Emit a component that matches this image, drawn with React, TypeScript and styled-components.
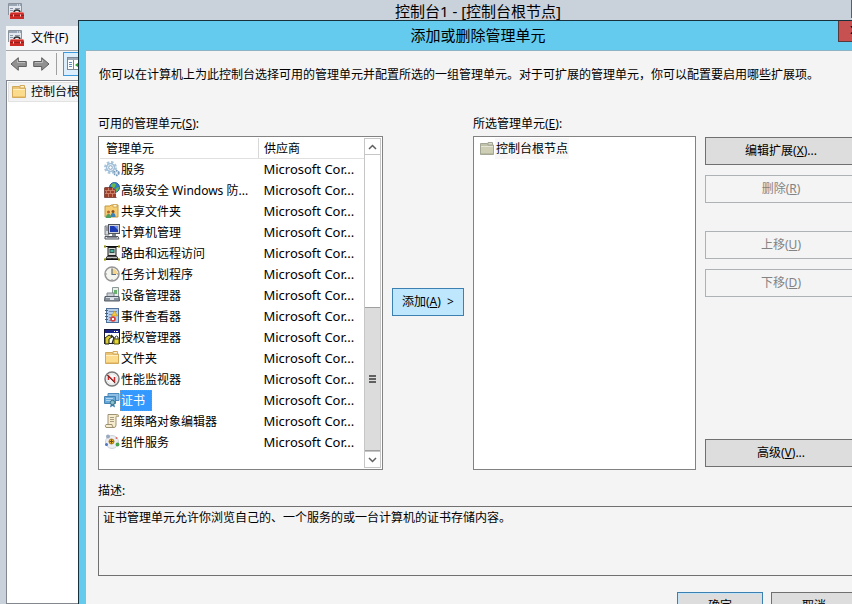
import React from "react";
import styled, { createGlobalStyle, css } from "styled-components";

const GlobalStyle = createGlobalStyle`
  * { box-sizing: border-box; }
  body {
    margin: 0;
    background: #c9d1db;
    color: #000;
    font: 12px/16px "Noto Sans", "Noto Sans CJK SC", sans-serif;
  }
  button, textarea { font: inherit; color: inherit; }
`;

/* ---------- Console window ---------- */

const Desktop = styled.main`
  position: relative;
  display: flex;
  height: 100vh;
  overflow: hidden;
`;

const ConsoleWindow = styled.section`
  flex: 1 0 auto;
  display: flex;
  flex-direction: column;
  margin-right: -104px;
  width: calc(100% + 104px);
  padding-left: 6px;
  background: #c9d1db;
`;

const ConsoleTitleBar = styled.header`
  display: grid;
  grid-template-columns: 1fr auto 1fr;
  height: 26px;
  padding: 0 8px 0 2px;
`;

const ConsoleIcon = styled.div`
  padding-top: 3px;
  height: 20px;
`;

const ConsoleTitle = styled.h1`
  margin: 0;
  font-size: 15px;
  line-height: 22px;
  font-weight: 400;
`;

const CaptionGroup = styled.div`
  justify-self: end;
  width: 97px;
  height: 18px;
  border: 1px solid #56606c;
  border-top: 0;
`;

const MenuBar = styled.nav`
  display: flex;
  align-items: center;
  gap: 7px;
  height: 25px;
  padding-left: 2px;
  background: #f5f6f7;
  border-bottom: 1px solid #a5a8ab;
`;

const MenuButton = styled.button`
  padding: 0;
  border: 0;
  background: none;
`;

const ToolBar = styled.div`
  display: flex;
  align-items: center;
  gap: 6px;
  height: 29px;
  padding: 0 4px 4px;
  background: #f5f5f5;
`;

const ToolButton = styled.button<{ $pressed?: boolean }>`
  display: flex;
  padding: 0;
  border: 0;
  background: none;
  ${(p) =>
    p.$pressed &&
    css`
      padding: 3px;
      border: 1px solid #3c9be0;
      background: #dceefb;
    `}
`;

const Separator = styled.div`
  width: 1px;
  height: 22px;
  background: #a0a0a0;
`;

const TreePane = styled.div`
  flex: 1;
  padding: 1px;
  background: #fff;
  border: 1px solid #828790;
`;

const TreeNode = styled.div`
  display: flex;
  align-items: center;
  gap: 4px;
  height: 20px;
  padding-left: 2px;
  background: #f3f3f3;
  border: 1px solid #e2e2e2;
`;

/* ---------- Dialog ---------- */

const Dialog = styled.section`
  position: absolute;
  top: 20px;
  left: 78px;
  right: -26px;
  min-height: 100%;
  background: #64cbef;
  border: 1px solid #16303c;
`;

const DialogTitleBar = styled.header`
  display: grid;
  grid-template-columns: 1fr auto 1fr;
  height: 29px;
  padding: 0 7px;
`;

const DialogTitle = styled.h2`
  grid-column: 2;
  margin: 0;
  font-size: 15px;
  line-height: 29px;
  font-weight: 400;
`;

const CloseButton = styled.button`
  justify-self: end;
  display: flex;
  align-items: center;
  justify-content: center;
  width: 32px;
  height: 21px;
  padding: 0 0 2px;
  background: #c75050;
  border: 1px solid #59383c;
  border-top: 0;
`;

const DialogBody = styled.div`
  display: flex;
  flex-direction: column;
  margin: 0 7px 7px;
  padding: 16px 13px 12px 12px;
  background: #f4f4f4;
  border-top: 1px solid #8fb4c4;
`;

const Intro = styled.p`
  margin: 0 0 33px;
  padding-left: 1px;
`;

const SnapInGrid = styled.div`
  display: grid;
  grid-template-columns: 285fr 72px 223fr 152px;
  grid-template-rows: 16px 334px;
  gap: 4px 9px;
  margin-bottom: 13px;
`;

const GroupTitle = styled.div<{ $column: number }>`
  grid-column: ${(p) => p.$column};
`;

const ListBox = styled.div<{ $column: number }>`
  grid-column: ${(p) => p.$column};
  grid-row: 2;
  display: flex;
  align-items: stretch;
  min-width: 0;
  padding: 1px;
  background: #fff;
  border: 1px solid #828282;
`;

const SnapInTable = styled.table`
  flex: 1;
  align-self: flex-start;
  min-width: 0;
  table-layout: fixed;
  border-collapse: collapse;
`;

const NameColumn = styled.col`
  width: 60%;
`;

const HeadCell = styled.th`
  height: 20px;
  padding: 2px 5px 0;
  text-align: left;
  font-weight: 400;
  border-bottom: 1px solid #e0e0e0;
  &:first-child {
    padding-left: 6px;
    border-right: 1px solid #d8d8d8;
  }
`;

const NameCell = styled.td`
  height: 21px;
  padding: 0 0 0 4px;
`;

const VendorCell = styled.td`
  padding: 0 0 0 5px;
  font-size: 13px;
  white-space: nowrap;
`;

const ItemLine = styled.div`
  display: flex;
  align-items: center;
  height: 21px;
`;

const ItemText = styled.span<{ $tone?: "selected" | "quiet" }>`
  padding: 0 1px;
  line-height: 21px;
  white-space: nowrap;
  ${(p) =>
    p.$tone === "selected" &&
    css`
      padding-right: 7px;
      color: #fff;
      background: #3399ff;
      outline: 1px dotted #8a93a0;
      outline-offset: -1px;
    `}
  ${(p) =>
    p.$tone === "quiet" &&
    css`
      background: #f7f7f7;
    `}
`;

const ScrollBar = styled.div`
  flex: none;
  display: flex;
  flex-direction: column;
  width: 17px;
  border: 1px solid #c6c6c6;
  border-width: 0 1px;
`;

const ScrollArrow = styled.button`
  display: flex;
  align-items: center;
  justify-content: center;
  height: 17px;
  padding: 0;
  background: #fff;
  border: 1px solid #c6c6c6;
  border-width: 1px 0;
`;

const ScrollSpace = styled.div`
  flex: 153;
`;

const ScrollThumb = styled.div`
  flex: 143;
  display: flex;
  align-items: center;
  justify-content: center;
  background: #dcdcdc;
  border: 1px solid #a0a0a0;
  border-width: 1px 0;
`;

const ChosenItem = styled.div`
  display: flex;
  align-items: center;
  height: 21px;
  padding-left: 4px;
`;

const AddSlot = styled.div`
  grid-column: 2;
  grid-row: 2;
  display: grid;
  align-items: center;
  padding-bottom: 2px;
`;

const ActionColumn = styled.div`
  grid-column: 4;
  grid-row: 2;
  display: flex;
  flex-direction: column;
  gap: 10px;
  padding: 1px 0 3px;
`;

const ActionGroup = styled.div<{ $spaced?: boolean }>`
  display: flex;
  flex-direction: column;
  gap: 10px;
  margin-top: ${(p) => (p.$spaced ? "18px" : "0")};
  &:last-child { margin-top: auto; }
`;

const PushButton = styled.button<{ $look?: "hot" | "primary" }>`
  height: 28px;
  padding: 0;
  line-height: 24px;
  white-space: pre;
  background: #dddddd;
  border: 1px solid #707070;
  &:disabled {
    color: #838383;
    background: #f4f4f4;
    border-color: #adb2b5;
  }
  ${(p) =>
    p.$look === "hot" &&
    css`
      background: #bee6fd;
      border-color: #3c7fb1;
    `}
  ${(p) =>
    p.$look === "primary" &&
    css`
      border-color: #3c7fb1;
      box-shadow: inset 0 0 0 1px #c4e4f6;
    `}
`;

const Description = styled.textarea`
  display: block;
  width: 100%;
  height: 70px;
  margin: 7px 0 16px;
  padding: 3px 4px;
  resize: none;
  outline: 0;
  background: #f4f4f4;
  border: 1px solid #707070;
  border-radius: 0;
`;

const Footer = styled.footer`
  display: grid;
  grid-template-columns: 86px 86px;
  gap: 8px;
  justify-content: end;
`;

/* ---------- Icons ---------- */

const Svg = ({ children, w = 16, h = 16 }: { children: React.ReactNode; w?: number; h?: number }) => (
  <svg width={w} height={h} viewBox={`0 0 ${w} ${h}`} aria-hidden="true">
    {children}
  </svg>
);

const ToolboxIcon = () => (
  <Svg>
    <path d="M.5 12V.5h13V9" fill="#e3e8ee" stroke="#8a929c" />
    <path d="M1 1h12v2H1z" fill="#9aa5b5" />
    <path d="M9 2h1M11 2h1" stroke="#fff" />
    <path d="M2 5.500h3M2 7.500h3M7 5.500h5" stroke="#8b97a8" />
    <path d="M6 9.500q0-2.500 3-2.500t3 2.500" fill="none" stroke="#33302f" strokeWidth="1.500" />
    <path d="M3 9h12l1 2v5H2v-5z" fill="#cc2a26" />
    <path d="M3 9.500h12" stroke="#ea7770" />
    <path d="M2 12.500h14" stroke="#9c1c19" />
    <path d="M5 11.500h1v2H5zM12 11.500h1v2h-1z" fill="#f3dcd8" />
  </Svg>
);

const FolderIcon = ({ muted }: { muted?: boolean }) => (
  <Svg>
    <path d="M1.500 2.500h7l1 1.500h5v9.500h-13z" fill={muted ? "#c0c2aa" : "#ecc475"} stroke={muted ? "#a5a796" : "#d3aa5b"} />
    <path d="M9 1.500h4.500V4H9z" fill={muted ? "#d9dacb" : "#fff3cf"} stroke={muted ? "#a5a796" : "#d3aa5b"} />
    <path d="M2 5h12v8H2z" fill={muted ? "#cdceb4" : "#fbdc8c"} />
    <path d="M2 5.500h12" stroke={muted ? "#e4e5d6" : "#fff0c2"} />
    <path d="M2 12h12v1H2z" fill={muted ? "#b9bba0" : "#eec56e"} />
  </Svg>
);

const ArrowIcon = ({ right }: { right?: boolean }) => (
  <Svg w={17} h={16}>
    <path
      d={right ? "M.7 5.500h8V1.700L16 8l-7.300 6.300v-3.800h-8z" : "M16.300 5.500h-8V1.700L1 8l7.300 6.300v-3.800h8z"}
      fill="#929292"
      stroke="#5f5f5f"
    />
    <path d={right ? "M2 6.500h7.500V4" : "M15 6.500H7.500V4"} fill="none" stroke="#bdbdbd" />
  </Svg>
);

const PaneIcon = () => (
  <Svg>
    <rect x=".5" y="1.500" width="15" height="12" fill="#fff" stroke="#7d8794" />
    <path d="M1 2h14v2H1z" fill="#9da7b5" />
    <path d="M6.500 4v9" stroke="#7d8794" />
    <path d="M2 6.500h3M2 8.500h3M2 10.500h3" stroke="#5b8fc4" />
    <path d="M8 9l4-3v2h3v2h-3v2z" fill="#2fa52f" />
  </Svg>
);

const ServicesIcon = () => (
  <Svg>
    <circle cx="6.500" cy="6.500" r="5" fill="none" stroke="#a9c5dc" strokeWidth="3" strokeDasharray="2.400 1.500" />
    <circle cx="6.500" cy="6.500" r="4" fill="#dbe9f4" stroke="#8fb2cf" />
    <circle cx="6.500" cy="6.500" r="1.800" fill="#fff" stroke="#87a9c5" />
    <circle cx="12.500" cy="12" r="2.300" fill="#e4edf5" stroke="#7598b8" strokeWidth="1.800" strokeDasharray="1.500 .8" />
  </Svg>
);

const FirewallIcon = () => (
  <Svg>
    <circle cx="10.500" cy="5.500" r="5" fill="#2f80c6" stroke="#22629d" />
    <path d="M7 3q2-3 5-1l-1 3-3 2zM12 6l3-1-1 4-3 1z" fill="#67b94c" />
    <path d="M1 6h8l3 2v7H1z" fill="#a13c27" />
    <path d="M1 8.500h10M1 11.500h11M4.500 6v2.500M8.500 6v2.500M2.500 9v2M6.500 9v2M10.500 9v2M4.500 12v3M8.500 12v3" stroke="#d79a83" strokeWidth=".7" />
    <path d="M.5 5.500h8M.5 6v9.500h12" fill="none" stroke="#63261c" strokeWidth=".8" />
  </Svg>
);

const SharedIcon = () => (
  <Svg>
    <path d="M1 3h5l1-1h7v12H1z" fill="#f5cd72" stroke="#c39a42" />
    <path d="M9 1.500h4V4H9z" fill="#fff5d9" stroke="#c39a42" strokeWidth=".7" />
    <circle cx="4.500" cy="9" r="1.500" fill="#b5632f" />
    <circle cx="9" cy="8.500" r="1.500" fill="#875022" />
    <path d="M2 15q0-4 2.500-4T7 15z" fill="#4c9f63" />
    <path d="M6.500 14q0-4 2.500-4t2.500 4z" fill="#3c81b8" />
  </Svg>
);

const ComputerIcon = () => (
  <Svg>
    <path d="M1 2h4v9H1z" fill="#d3d6da" stroke="#5b6069" strokeWidth=".8" />
    <path d="M2 4h2M2 6h2" stroke="#5b6069" />
    <rect x="4.500" y=".5" width="11" height="9" fill="#cfd3d8" stroke="#51565e" />
    <path d="M6 2h8v6H6z" fill="#1c3bb2" />
    <path d="M10 2h4v4z" fill="#6f93ef" />
    <path d="M8 10h4v2H8z" fill="#7f858c" />
    <path d="M1 12.500h13l1 2.500H1z" fill="#e1e3e6" stroke="#51565e" />
    <path d="M3 13.500h10" stroke="#8a9099" />
  </Svg>
);

const RoutingIcon = () => (
  <Svg>
    <path d="M0 1.500h16M0 14.500h16" stroke="#111" />
    <path d="M1 0v3M15 0v3M1 13v3M15 13v3" stroke="#b6b534" strokeWidth="1.500" />
    <path d="M8 1v2M8 12v3" stroke="#111" strokeWidth="2" />
    <rect x="4" y="2.500" width="8" height="8" fill="#d5d8d4" stroke="#1e1e1e" />
    <rect x="6" y="4.500" width="4" height="3" fill="#49b7a5" stroke="#2b5149" />
    <path d="M3 11.500h10l1 2H2z" fill="#c0c3c0" stroke="#222" strokeWidth=".8" />
  </Svg>
);

const ClockIcon = () => (
  <Svg>
    <circle cx="8" cy="8" r="7" fill="#f5f5f0" stroke="#969696" strokeWidth="1.500" />
    <path d="M8 8V2.500A5.500 5.500 0 0 1 13.500 8z" fill="#f2d58a" />
    <path d="M8 3v5.500h4" fill="none" stroke="#5d6d86" strokeWidth="1.200" />
    <path d="M8 1.800v1M8 13.200v1M1.800 8h1M13.200 8h1" stroke="#777" />
  </Svg>
);

const DeviceIcon = () => (
  <Svg>
    <path d="M8.500.5h6v9h-6z" fill="#e8efe8" stroke="#8a9896" />
    <path d="M10 3h3v4h-3z" fill="#68b36c" />
    <path d="M3 6h7v4H3z" fill="#c8ced4" stroke="#808991" />
    <path d="M1 9.500h14l.5 4.500H.5z" fill="#8a949e" stroke="#555f69" />
    <path d="M2 10.500h12" stroke="#d7dde2" />
    <path d="M6 11h4v2H6z" fill="#dfe3e7" />
  </Svg>
);

const EventIcon = () => (
  <Svg>
    <rect x="2.500" y=".5" width="12" height="14" fill="#b5cde8" stroke="#4f7199" />
    <path d="M1 2.500h3M1 5.500h3M1 8.500h3M1 11.500h3" stroke="#48607c" />
    <path d="M5 3.500h8M5 6.500h3M5 9.500h3M5 12.500h3" stroke="#6d91ba" />
    <path d="M10.500 3l3 5h-6z" fill="#f5cb3a" stroke="#c18d22" strokeWidth=".6" />
    <circle cx="9" cy="11" r="2.800" fill="#d9423a" />
    <path d="M8 10l2 2M10 10l-2 2" stroke="#fff" />
  </Svg>
);

const AuthorizationIcon = () => (
  <Svg>
    <rect x=".5" y=".5" width="15" height="14" fill="#fff" stroke="#171738" />
    <path d="M1 1h14v3H1z" fill="#1b2588" />
    <path d="M10 2.500h1M12 2.500h2" stroke="#fff" />
    <path d="M1 15V9l4-3 3 2-3 2v5z" fill="#d9cb35" stroke="#252510" />
    <path d="M7 6l3 3-2 6" fill="none" stroke="#252525" strokeWidth="1.400" />
    <path d="M11 10V8q1.500-2 3 0v2" fill="none" stroke="#333" />
    <path d="M10 10h5v5h-5z" fill="#e4d82e" stroke="#55510f" />
  </Svg>
);

const PerformanceIcon = () => (
  <Svg>
    <circle cx="8" cy="8" r="7" fill="#fff" stroke="#7a7a7a" strokeWidth="1.500" />
    <circle cx="8" cy="8" r="5.300" fill="#f7f7f7" stroke="#c9c9c9" strokeWidth=".6" />
    <path d="M4.500 9V5l6 6V6" fill="none" stroke="#cc2a2a" strokeWidth="1.500" />
    <path d="M3 4l8 8" stroke="#4a2c2c" strokeWidth=".8" />
  </Svg>
);

const CertificateIcon = () => (
  <Svg>
    <path d="M4 1.500h11v7H4z" fill="#8dbfe4" stroke="#4f8cbd" />
    <path d="M.5 4.500h11v7H.5z" fill="#68a9db" stroke="#4582b4" />
    <path d="M2 6.500h7M2 8.500h5" stroke="#b4d6ee" />
    <path d="M7 11l-1 4.500 2.500-1.500 2.500 1.500-1-4.500z" fill="#3c7eb0" />
    <circle cx="8.500" cy="10.500" r="2.200" fill="#8bc0c9" stroke="#38758f" />
  </Svg>
);

const ScrollIcon = () => (
  <Svg>
    <path d="M4 1.500h9q2 0 1.500 2H12V12q0 2.500-2 2.500H2Q.5 12.500 2 11.500h2z" fill="#f6edcf" stroke="#9d9272" />
    <path d="M12 3.500q-.5-2 1-2t1.500 2z" fill="#d9cca5" />
    <path d="M2 11.500h6q0 3 2 3" fill="none" stroke="#9d9272" />
    <path d="M6 4.500h4M6 6.500h4M6 8.500h4" stroke="#a79c7f" />
  </Svg>
);

const ComponentIcon = () => (
  <Svg>
    <circle cx="8" cy="8" r="6.500" fill="#ebeef3" stroke="#cdd3dc" />
    <circle cx="7.500" cy="7.500" r="2.500" fill="#efb829" stroke="#a97a1c" />
    <path d="M7.500 5.500v4M5.500 7.500h4" stroke="#6d4a12" />
    <circle cx="4" cy="2.500" r="2" fill="#9aa9bd" />
    <circle cx="13.500" cy="10.500" r="1.900" fill="#49a34e" />
    <circle cx="2.500" cy="10.500" r="1.500" fill="#4b75bd" />
    <circle cx="12.500" cy="4" r="1" fill="#d96a6a" />
  </Svg>
);

const Chevron = ({ down }: { down?: boolean }) => (
  <Svg w={9} h={6}>
    <path d={down ? "M1 1l3.500 3.500L8 1" : "M1 5l3.500-3.500L8 5"} fill="none" stroke="#606060" strokeWidth="1.500" />
  </Svg>
);

/* ---------- Data ---------- */

const snapIns: { name: string; Icon: React.ComponentType; selected?: boolean }[] = [
  { name: "服务", Icon: ServicesIcon },
  { name: "高级安全 Windows 防...", Icon: FirewallIcon },
  { name: "共享文件夹", Icon: SharedIcon },
  { name: "计算机管理", Icon: ComputerIcon },
  { name: "路由和远程访问", Icon: RoutingIcon },
  { name: "任务计划程序", Icon: ClockIcon },
  { name: "设备管理器", Icon: DeviceIcon },
  { name: "事件查看器", Icon: EventIcon },
  { name: "授权管理器", Icon: AuthorizationIcon },
  { name: "文件夹", Icon: FolderIcon },
  { name: "性能监视器", Icon: PerformanceIcon },
  { name: "证书", Icon: CertificateIcon, selected: true },
  { name: "组策略对象编辑器", Icon: ScrollIcon },
  { name: "组件服务", Icon: ComponentIcon },
];

export default function App() {
  return (
    <>
      <GlobalStyle />
      <Desktop>
        <ConsoleWindow>
          <ConsoleTitleBar>
            <ConsoleIcon><ToolboxIcon /></ConsoleIcon>
            <ConsoleTitle>控制台1 - [控制台根节点]</ConsoleTitle>
            <CaptionGroup />
          </ConsoleTitleBar>
          <MenuBar>
            <ToolboxIcon />
            <MenuButton>文件(F)</MenuButton>
          </MenuBar>
          <ToolBar>
            <ToolButton aria-label="后退"><ArrowIcon /></ToolButton>
            <ToolButton aria-label="前进"><ArrowIcon right /></ToolButton>
            <Separator />
            <ToolButton $pressed aria-label="显示/隐藏控制台树"><PaneIcon /></ToolButton>
          </ToolBar>
          <TreePane>
            <TreeNode><FolderIcon />控制台根节点</TreeNode>
          </TreePane>
        </ConsoleWindow>

        <Dialog role="dialog" aria-labelledby="dialog-title">
          <DialogTitleBar>
            <DialogTitle id="dialog-title">添加或删除管理单元</DialogTitle>
            <CloseButton aria-label="关闭">
              <Svg w={9} h={8}>
                <path d="M1 0l7 8M8 0L1 8" stroke="#111" strokeWidth="1.600" />
              </Svg>
            </CloseButton>
          </DialogTitleBar>
          <DialogBody>
            <Intro>
              你可以在计算机上为此控制台选择可用的管理单元并配置所选的一组管理单元。对于可扩展的管理单元，你可以配置要启用哪些扩展项。
            </Intro>
            <SnapInGrid>
              <GroupTitle $column={1} id="available">可用的管理单元(<u>S</u>):</GroupTitle>
              <GroupTitle $column={3} id="chosen">所选管理单元(<u>E</u>):</GroupTitle>
              <ListBox $column={1}>
                <SnapInTable aria-labelledby="available">
                  <colgroup><NameColumn /><col /></colgroup>
                  <thead>
                    <tr><HeadCell>管理单元</HeadCell><HeadCell>供应商</HeadCell></tr>
                  </thead>
                  <tbody>
                    {snapIns.map(({ name, Icon, selected }) => (
                      <tr key={name} aria-selected={selected}>
                        <NameCell>
                          <ItemLine>
                            <Icon />
                            <ItemText $tone={selected ? "selected" : undefined}>{name}</ItemText>
                          </ItemLine>
                        </NameCell>
                        <VendorCell>Microsoft Cor...</VendorCell>
                      </tr>
                    ))}
                  </tbody>
                </SnapInTable>
                <ScrollBar>
                  <ScrollArrow aria-label="向上滚动"><Chevron /></ScrollArrow>
                  <ScrollSpace />
                  <ScrollThumb>
                    <Svg w={7} h={8}><path d="M0 1h7M0 4h7M0 7h7" stroke="#606060" strokeWidth="2" /></Svg>
                  </ScrollThumb>
                  <ScrollArrow aria-label="向下滚动"><Chevron down /></ScrollArrow>
                </ScrollBar>
              </ListBox>
              <AddSlot>
                <PushButton $look="hot">添加(<u>A</u>)  &gt;</PushButton>
              </AddSlot>
              <ListBox $column={3} role="listbox" aria-labelledby="chosen">
                <ChosenItem role="option">
                  <FolderIcon muted />
                  <ItemText $tone="quiet">控制台根节点</ItemText>
                </ChosenItem>
              </ListBox>
              <ActionColumn>
                <ActionGroup>
                  <PushButton>编辑扩展(<u>X</u>)...</PushButton>
                  <PushButton disabled>删除(<u>R</u>)</PushButton>
                </ActionGroup>
                <ActionGroup $spaced>
                  <PushButton disabled>上移(<u>U</u>)</PushButton>
                  <PushButton disabled>下移(<u>D</u>)</PushButton>
                </ActionGroup>
                <ActionGroup>
                  <PushButton>高级(<u>V</u>)...</PushButton>
                </ActionGroup>
              </ActionColumn>
            </SnapInGrid>
            <label htmlFor="description">描述:</label>
            <Description
              id="description"
              readOnly
              defaultValue="证书管理单元允许你浏览自己的、一个服务的或一台计算机的证书存储内容。"
            />
            <Footer>
              <PushButton $look="primary">确定</PushButton>
              <PushButton>取消</PushButton>
            </Footer>
          </DialogBody>
        </Dialog>
      </Desktop>
    </>
  );
}
